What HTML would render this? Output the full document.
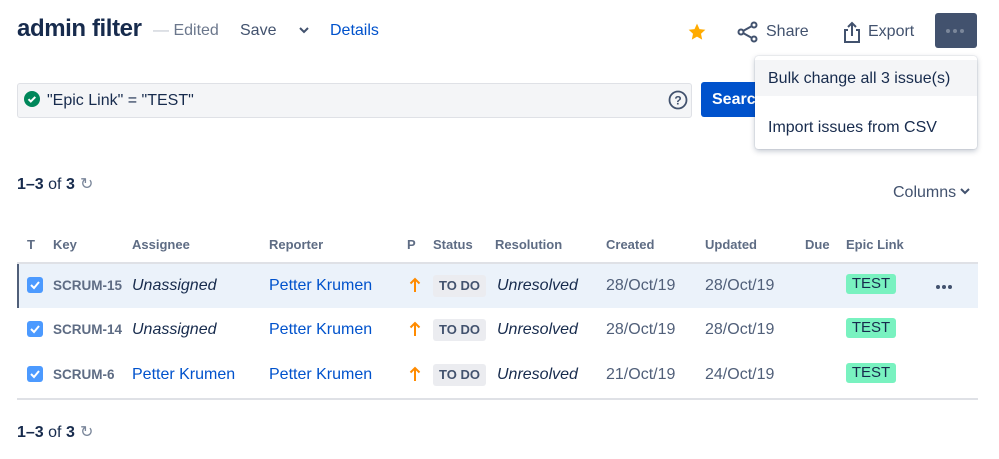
<!DOCTYPE html>
<html><head><meta charset="utf-8"><style>
*{margin:0;padding:0;box-sizing:border-box}
body{width:999px;height:459px;background:#fff;font-family:"Liberation Sans",sans-serif;position:relative;overflow:hidden;color:#172B4D}
.a{position:absolute;white-space:nowrap}
.h{font-size:13px;font-weight:bold;color:#5E6C84;top:237px}
.c{font-size:16px}
.key{font-size:13.5px;font-weight:bold;color:#5E6C84}
.it{font-style:italic;color:#172B4D}
.bl{color:#0052CC}
.gr{color:#505F79}
.cb{width:16px;height:16px;background:#4C9AFF;border-radius:3px}
.todo{width:53px;height:22px;background:#EBECF0;border-radius:3px;font-size:13px;font-weight:bold;color:#42526E;text-align:center;line-height:22px}
.test{width:50px;height:20px;background:#79F2C0;border-radius:3px;font-size:15px;color:#172B4D;text-align:center;line-height:20px}
</style></head><body>
<div class="a" style="left:17px;top:15px;font-size:24px;font-weight:bold;letter-spacing:-0.4px;color:#172B4D">admin filter</div>
<div class="a" style="left:153px;top:22px;font-size:16px;color:#6B778C"><span style="color:#C1C7D0">—</span> Edited</div>
<div class="a" style="left:240px;top:22px;font-size:16px;color:#42526E">Save</div>
<svg class="a" style="left:298px;top:26px" width="12" height="8"><path d="M2 2l4 4 4-4" stroke="#42526E" stroke-width="2" fill="none"/></svg>
<div class="a" style="left:330px;top:22px;font-size:16px;color:#0052CC">Details</div>
<svg class="a" style="left:687px;top:22px" width="20" height="20" viewBox="0 0 24 24"><path d="M12 2l3 6.5 7 .8-5.2 4.8 1.4 7-6.2-3.6-6.2 3.6 1.4-7L2 9.3l7-.8z" fill="#FFAB00"/></svg>
<svg class="a" style="left:737px;top:21px" width="22" height="22" viewBox="0 0 22 22"><circle cx="17" cy="4" r="2.5" fill="none" stroke="#42526E" stroke-width="2"/><circle cx="4" cy="11" r="2.5" fill="none" stroke="#42526E" stroke-width="2"/><circle cx="17" cy="18" r="2.5" fill="none" stroke="#42526E" stroke-width="2"/><path d="M6 10l9-5M6 12l9 5" stroke="#42526E" stroke-width="2"/></svg>
<div class="a" style="left:766px;top:23px;font-size:16px;color:#42526E">Share</div>
<svg class="a" style="left:842px;top:20px" width="20" height="24" viewBox="0 0 20 24"><path d="M6 10H3v12h14V10h-3" stroke="#42526E" stroke-width="2" fill="none"/><path d="M10 16V3M6 7l4-4 4 4" stroke="#42526E" stroke-width="2" fill="none"/></svg>
<div class="a" style="left:868px;top:23px;font-size:16px;color:#42526E">Export</div>
<div class="a" style="left:935px;top:13px;width:42px;height:35px;background:#42526E;border-radius:3px"></div>
<div class="a" style="left:946px;top:29px;width:4px;height:4px;border-radius:2px;background:#7A869A;box-shadow:7px 0 #7A869A,14px 0 #7A869A"></div>

<div class="a" style="left:17px;top:83px;width:675px;height:35px;background:#F4F5F7;border:1px solid #DFE1E6;border-radius:3px"></div>
<svg class="a" style="left:24px;top:91px" width="16" height="16" viewBox="0 0 16 16"><circle cx="8" cy="8" r="8" fill="#00875A"/><path d="M4.5 8.2l2.3 2.3 4.5-4.6" stroke="#fff" stroke-width="2" fill="none"/></svg>
<div class="a" style="left:47px;top:92px;font-size:16px">"Epic Link" = "TEST"</div>
<svg class="a" style="left:668px;top:90px" width="20" height="20" viewBox="0 0 20 20"><circle cx="10" cy="10" r="8.5" fill="none" stroke="#42526E" stroke-width="1.8"/><text x="10" y="14.5" font-size="12" font-weight="bold" text-anchor="middle" fill="#42526E" font-family="Liberation Sans">?</text></svg>
<div class="a" style="left:701px;top:82px;width:70px;height:35px;background:#0052CC;border-radius:3px;color:#fff;font-size:16px;font-weight:bold;line-height:35px;padding-left:11px;overflow:hidden">Search</div>

<div class="a" style="left:755px;top:56px;width:222px;height:93px;background:#fff;border-radius:3px;box-shadow:0 2px 6px rgba(9,30,66,.25),0 0 1px rgba(9,30,66,.3)"></div>
<div class="a" style="left:755px;top:60px;width:222px;height:36px;background:#F4F5F7"></div>
<div class="a" style="left:768px;top:70px;font-size:16px">Bulk change all 3 issue(s)</div>
<div class="a" style="left:768px;top:119px;font-size:16px">Import issues from CSV</div>

<div class="a" style="left:17px;top:176px;font-size:16px"><b>1–3</b> of <b>3</b></div>
<div class="a" style="left:80px;top:174px;font-size:16px;color:#7A869A">↻</div>
<div class="a" style="left:893px;top:184px;font-size:16px;color:#42526E">Columns</div>
<svg class="a" style="left:960px;top:187px" width="10" height="8"><path d="M1 2l4 4 4-4" stroke="#42526E" stroke-width="2" fill="none"/></svg>

<div class="a h" style="left:27px">T</div>
<div class="a h" style="left:53px">Key</div>
<div class="a h" style="left:132px">Assignee</div>
<div class="a h" style="left:269px">Reporter</div>
<div class="a h" style="left:407px">P</div>
<div class="a h" style="left:433px">Status</div>
<div class="a h" style="left:495px">Resolution</div>
<div class="a h" style="left:606px">Created</div>
<div class="a h" style="left:705px">Updated</div>
<div class="a h" style="left:805px">Due</div>
<div class="a h" style="left:846px">Epic Link</div>

<div class="a" style="left:17px;top:262px;width:961px;height:2px;background:#DFE1E6"></div>
<div class="a" style="left:17px;top:264px;width:961px;height:44px;background:#EBF2FA;border-left:2px solid #505F79"></div>
<div class="a" style="left:17px;top:398px;width:961px;height:2px;background:#DFE1E6"></div>

<div class="a cb" style="left:27px;top:277px"></div>
<div class="a cb" style="left:27px;top:321px"></div>
<div class="a cb" style="left:27px;top:366px"></div>
<svg class="a" style="left:27px;top:277px" width="16" height="105"><g stroke="#fff" stroke-width="2" fill="none"><path d="M4 8l3 3 5-6"/><path d="M4 52l3 3 5-6"/><path d="M4 97l3 3 5-6"/></g></svg>

<div class="a key" style="left:53px;top:278px">SCRUM-15</div>
<div class="a key" style="left:53px;top:322px">SCRUM-14</div>
<div class="a key" style="left:53px;top:367px">SCRUM-6</div>
<div class="a c it" style="left:132px;top:277px">Unassigned</div>
<div class="a c it" style="left:132px;top:321px">Unassigned</div>
<div class="a c bl" style="left:132px;top:366px">Petter Krumen</div>
<div class="a c bl" style="left:269px;top:277px">Petter Krumen</div>
<div class="a c bl" style="left:269px;top:321px">Petter Krumen</div>
<div class="a c bl" style="left:269px;top:366px">Petter Krumen</div>
<svg class="a" style="left:408px;top:276px" width="14" height="105"><g stroke="#FF8B00" stroke-width="2" fill="none"><path d="M7 16V3M2.5 7.5L7 3l4.5 4.5"/><path d="M7 60V47M2.5 51.5L7 47l4.5 4.5"/><path d="M7 105V92M2.5 96.5L7 92l4.5 4.5"/></g></svg>
<div class="a todo" style="left:433px;top:275px">TO DO</div>
<div class="a todo" style="left:433px;top:319px">TO DO</div>
<div class="a todo" style="left:433px;top:364px">TO DO</div>
<div class="a c it" style="left:497px;top:277px">Unresolved</div>
<div class="a c it" style="left:497px;top:321px">Unresolved</div>
<div class="a c it" style="left:497px;top:366px">Unresolved</div>
<div class="a c gr" style="left:606px;top:277px">28/Oct/19</div>
<div class="a c gr" style="left:606px;top:321px">28/Oct/19</div>
<div class="a c gr" style="left:606px;top:366px">21/Oct/19</div>
<div class="a c gr" style="left:705px;top:277px">28/Oct/19</div>
<div class="a c gr" style="left:705px;top:321px">28/Oct/19</div>
<div class="a c gr" style="left:705px;top:366px">24/Oct/19</div>
<div class="a test" style="left:846px;top:274px">TEST</div>
<div class="a test" style="left:846px;top:318px">TEST</div>
<div class="a test" style="left:846px;top:363px">TEST</div>
<div class="a" style="left:936px;top:285px;width:4px;height:4px;border-radius:2px;background:#42526E;box-shadow:6px 0 #42526E,12px 0 #42526E"></div>

<div class="a" style="left:17px;top:424px;font-size:16px"><b>1–3</b> of <b>3</b></div>
<div class="a" style="left:80px;top:422px;font-size:16px;color:#7A869A">↻</div>
</body></html>
